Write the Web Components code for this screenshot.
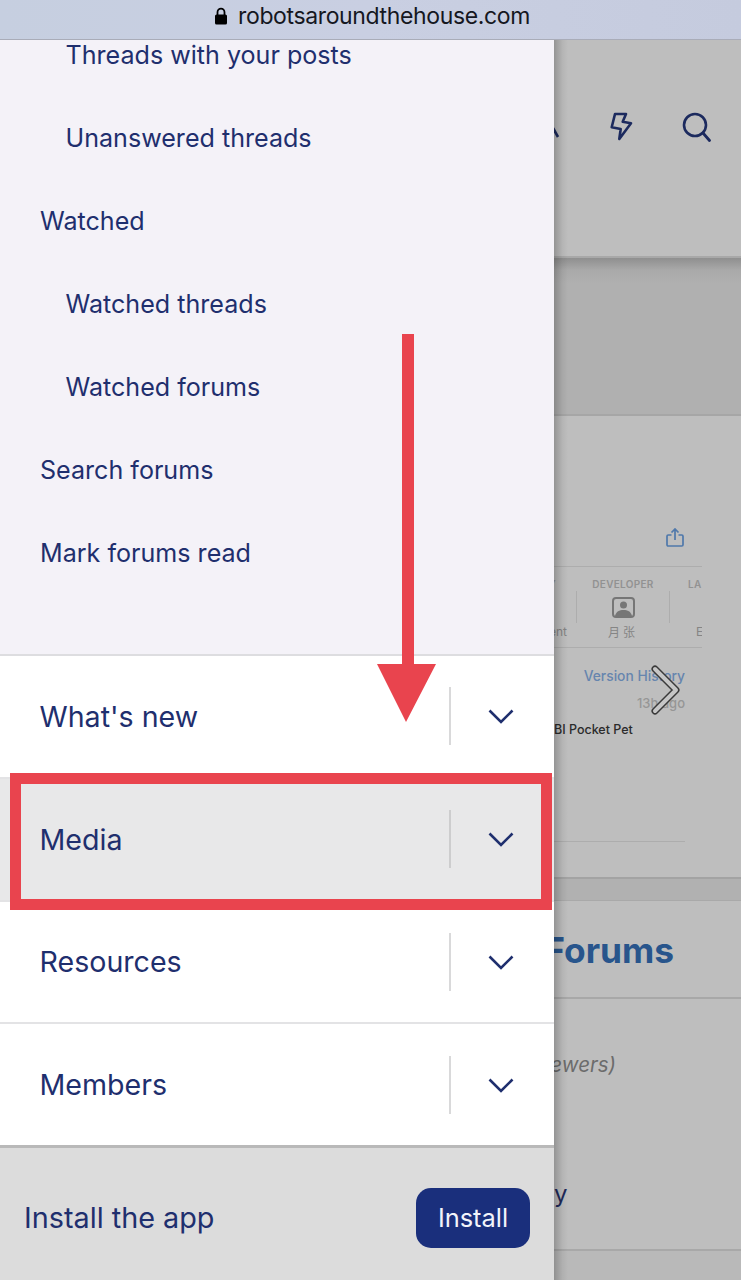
<!DOCTYPE html>
<html>
<head>
<meta charset="utf-8">
<style>
  html, body { margin: 0; padding: 0; background: #bcbcbc; }
</style>
</head>
<body>
<app-shell>
  <url-bar slot="top">robotsaroundthehouse.com</url-bar>
  <nav-drawer slot="drawer">
    <sub-link indent>Threads with your posts</sub-link>
    <sub-link indent>Unanswered threads</sub-link>
    <sub-link>Watched</sub-link>
    <sub-link indent>Watched threads</sub-link>
    <sub-link indent>Watched forums</sub-link>
    <sub-link>Search forums</sub-link>
    <sub-link>Mark forums read</sub-link>
    <menu-row slot="rows">What's new</menu-row>
    <menu-row slot="rows" active>Media</menu-row>
    <menu-row slot="rows">Resources</menu-row>
    <menu-row slot="rows">Members</menu-row>
    <install-bar slot="footer"></install-bar>
  </nav-drawer>
  <dimmed-page slot="page"></dimmed-page>
  <red-marks slot="over"></red-marks>
</app-shell>

<script>
const FONT = `Inter, "Noto Sans", sans-serif`;
const INK = '#1f2f6e';

class AppShell extends HTMLElement {
  constructor() {
    super();
    this.attachShadow({ mode: 'open' }).innerHTML = `
      <style>
        :host { display: flex; flex-direction: column; width: 741px; height: 1280px; overflow: hidden; }
        .stage { position: relative; flex: 1; display: flex; min-height: 0; }
      </style>
      <slot name="top"></slot>
      <div class="stage">
        <slot name="drawer"></slot>
        <slot name="page"></slot>
        <slot name="over"></slot>
      </div>`;
  }
}

class UrlBar extends HTMLElement {
  constructor() {
    super();
    this.attachShadow({ mode: 'open' }).innerHTML = `
      <style>
        :host {
          display: flex; align-items: center; justify-content: center; gap: 10px;
          height: 40px; flex: none; box-sizing: border-box;
          background: linear-gradient(90deg, #c6cfe0, #c9cfe2 50%, #c5cbde);
          border-bottom: 1px solid #a9acb8;
          font: 400 23px ${FONT}; color: #15171f; padding: 0 0 7px 3px;
          letter-spacing: -0.37px;
        }
        svg { display: block; }
      </style>
      <svg width="14" height="18" viewBox="0 0 14 18">
        <path d="M3.5 8V5.2a3.5 3.5 0 0 1 7 0V8" fill="none" stroke="#000" stroke-width="1.8"/>
        <rect x="1" y="7.5" width="12" height="10" rx="1.6" fill="#000"/>
      </svg>
      <slot></slot>`;
  }
}

class NavDrawer extends HTMLElement {
  constructor() {
    super();
    this.attachShadow({ mode: 'open' }).innerHTML = `
      <style>
        :host {
          display: flex; flex-direction: column; flex: none; width: 554px;
          background: #fff; position: relative; z-index: 1;
        }
        .subs {
          display: flex; flex-direction: column; height: 616px; flex: none; box-sizing: border-box;
          background: #f4f2f8; border-bottom: 2px solid #dddde0; overflow: hidden;
        }
        .rows { display: flex; flex-direction: column; flex: none; height: 489px; }
      </style>
      <div class="subs"><slot></slot></div>
      <div class="rows"><slot name="rows"></slot></div>
      <slot name="footer"></slot>`;
  }
}

class SubLink extends HTMLElement {
  constructor() {
    super();
    this.attachShadow({ mode: 'open' }).innerHTML = `
      <style>
        :host {
          display: flex; align-items: center; height: 83px; flex: none; padding-left: 40px;
          font: 400 25.1px ${FONT}; color: ${INK};
        }
        :host([indent]) { padding-left: 65.5px; }
        /* the list is scrolled: the first row is cut by the top of the drawer */
        :host(:first-child) { margin-top: -27px; }
      </style>
      <slot></slot>`;
  }
}

class MenuRow extends HTMLElement {
  constructor() {
    super();
    this.attachShadow({ mode: 'open' }).innerHTML = `
      <style>
        :host {
          display: flex; align-items: center; flex: 1; box-sizing: border-box;
          padding-left: 39.5px; border-bottom: 2px solid #e3e3e5;
          font: 400 28.6px ${FONT}; color: ${INK};
        }
        :host(:last-of-type) { border-bottom: 0; }
        :host([active]) { background: #e8e8e9; }
        .label { flex: 1; }
        .split { width: 2px; height: 58px; background: #d9d9da; }
        :host([active]) .split { background: #cdcdce; }
        .toggle { width: 100px; margin-right: 3px; display: flex; justify-content: center; }
        svg { display: block; }
      </style>
      <span class="label"><slot></slot></span>
      <span class="split"></span>
      <span class="toggle">
        <svg width="26" height="16" viewBox="0 0 26 16">
          <path d="M1.5 2.5 13 14 24.5 2.5" fill="none" stroke="${INK}" stroke-width="2.6"/>
        </svg>
      </span>`;
  }
}

class InstallBar extends HTMLElement {
  constructor() {
    super();
    this.attachShadow({ mode: 'open' }).innerHTML = `
      <style>
        :host {
          display: flex; align-items: center; justify-content: space-between; flex: 1; box-sizing: border-box;
          padding: 7px 24px 0; background: #dcdcdc; border-top: 3px solid #b9b9b9;
          font: 400 28.8px ${FONT}; color: ${INK};
        }
        .btn {
          display: flex; align-items: center; justify-content: center;
          width: 114px; height: 60px; border-radius: 15px; margin-bottom: 0;
          background: #1a2f7c; color: #f2f4fb; font-size: 25.4px;
        }
      </style>
      <span>Install the app</span>
      <span class="btn">Install</span>`;
  }
}

// everything behind the scrim, right aligned so the drawer cuts it off
class DimmedPage extends HTMLElement {
  constructor() {
    super();
    this.attachShadow({ mode: 'open' }).innerHTML = `
      <style>
        :host {
          display: flex; flex-direction: column; flex: 1; min-width: 0; overflow: hidden;
          font-family: ${FONT}; background: #b1b1b1; position: relative;
        }
        :host::before {
          content: ""; position: absolute; top: 0; bottom: 0; left: 0; width: 14px; z-index: 1;
          background: linear-gradient(90deg, rgba(0,0,0,.22), rgba(0,0,0,.05) 60%, rgba(0,0,0,0));
        }
        svg { display: block; flex: none; }
        section { background: #bebebe; flex: none; display: flex; flex-direction: column; box-sizing: border-box; }

        .head {
          height: 218px; border-bottom: 2px solid #a8a8a8; flex-direction: row;
          justify-content: flex-end; align-items: flex-start; gap: 47px; padding: 71px 30px 0 0;
        }
        .band {
          height: 156px; flex: none;
          background: linear-gradient(180deg, #8f8f8f, #a9a9a9 12px, #b0b0b0 26px);
        }

        .card { height: 465px; border-top: 2px solid #a6a6a6; border-bottom: 2px solid #a3a3a3; }
        .share { height: 151px; flex: none; margin-right: 39px; border-bottom: 1px solid #adadad; display: flex; justify-content: flex-end; align-items: flex-start; padding: 112px 18px 0 0; box-sizing: border-box; }
        .strip { height: 81px; flex: none; margin-right: 39px; border-bottom: 1px solid #adadad; display: flex; box-sizing: border-box; overflow: hidden; color: #8a8a8a; }
        .cell { display: flex; flex-direction: column; align-items: center; flex: none; box-sizing: border-box; padding-top: 11px; white-space: nowrap; }
        .cell.first { width: 22px; align-items: flex-end; padding-right: 9px; }
        .cell.first .cap { margin-right: 11px; }
        .cell.dev { width: 92px; }
        .cell.lang { width: 33px; align-items: flex-start; padding-left: 18px; }
        .rule { width: 1px; height: 32px; margin-top: 24px; background: #adadad; flex: none; }
        .cap { font-size: 10px; line-height: 12px; font-weight: 600; letter-spacing: .3px; height: 12px; color: #929292; }
        .val { font-size: 12px; line-height: 16px; margin-top: 34px; color: #858585; }
        .dev svg { margin: 7px 0 -19px; }
        .dev .val { font-family: Inter, "Noto Sans CJK SC", sans-serif; letter-spacing: 3px; margin-top: 26px; }
        .lang .val { padding-left: 8px; }

        .ver { margin: 18px 56px 0 0; line-height: 20px; font-size: 13.8px; font-weight: 500; color: #6685ae; text-align: right; }
        .ago { margin: 7px 56px 0 0; line-height: 20px; font-size: 13px; font-weight: 500; color: #969696; text-align: right; }
        .name { margin: 8px 0 0 0; line-height: 18px; font-size: 12.5px; font-weight: 500; color: #2b2b2b; }
        .line { margin: 102px 56px 0 0; height: 1px; background: #adadad; flex: none; }

        .gap { height: 21px; flex: none; }

        .forums { height: 351px; border-top: 1px solid #a9a9a9; border-bottom: 2px solid #a8a8a8; }
        .title { height: 98px; flex: none; border-bottom: 2px solid #a8a8a8; box-sizing: border-box; display: flex; justify-content: flex-end; align-items: center; padding: 2px 67px 0 0; font-size: 35.3px; font-weight: 700; color: #28558c; overflow: hidden; white-space: nowrap; }
        .view { display: flex; justify-content: flex-end; padding-right: 125px; margin-top: 52px; line-height: 28px; font-size: 20.5px; font-style: italic; color: #6c6c6c; }
        .who { padding-left: 0; margin-top: 100px; line-height: 30px; font-size: 24px; color: #1f2a5a; }
        .tail { flex: 1; background: #b9b9b9; }
        .arrow { position: absolute; left: 96px; top: 624px; z-index: 1; }
      </style>
      <section class="head">
        <svg width="10" height="30" viewBox="0 0 10 30" style="margin-right:3px"><path d="M3 17 8 26" fill="none" stroke="#1c2a5e" stroke-width="2.6"/></svg>
        <svg width="24" height="30" viewBox="0 0 24 30">
          <path d="M5 3h11l-3.3 7.7 8.3 1.6L9.3 28l1.4-10-9-1.7z" fill="none" stroke="#1c2a5e" stroke-width="2.6" stroke-linejoin="round"/>
        </svg>
        <svg width="30" height="32" viewBox="0 0 30 32">
          <circle cx="14" cy="14" r="11" fill="none" stroke="#1c2a5e" stroke-width="2.6"/>
          <path d="M22 22l6.5 7.5" stroke="#1c2a5e" stroke-width="2.8" stroke-linecap="round"/>
        </svg>
      </section>
      <div class="band"></div>
      <section class="card">
        <div class="share">
          <svg width="18" height="19" viewBox="0 0 18 19" fill="none" stroke="#4f78ab" stroke-width="1.7">
            <path d="M5.5 7H2.2a1.2 1.2 0 0 0-1.2 1.2v8.6A1.2 1.2 0 0 0 2.2 18h13.6a1.2 1.2 0 0 0 1.2-1.2V8.2A1.2 1.2 0 0 0 15.800 7h-3.300"/>
            <path d="M9 12V1.500M5.500 4.500 9 1l3.500 3.500"/>
          </svg>
        </div>
        <div class="strip">
          <div class="cell first"><span class="cap">Y</span><span class="val">ent</span></div>
          <div class="rule"></div>
          <div class="cell dev">
            <span class="cap">DEVELOPER</span>
            <svg width="23" height="21" viewBox="0 0 23 21">
              <rect x="1" y="1" width="21" height="19" rx="3" fill="none" stroke="#767676" stroke-width="2"/>
              <circle cx="11.500" cy="8" r="3.500" fill="#767676"/>
              <path d="M3 19c1-4.500 4.500-6 8.500-6s7.500 1.500 8.500 6z" fill="#767676"/>
            </svg>
            <span class="val">月张</span>
          </div>
          <div class="rule"></div>
          <div class="cell lang"><span class="cap">LA</span><span class="val">E</span></div>
        </div>
        <div class="ver">Version History</div>
        <div class="ago">13h ago</div>
        <div class="name">BI Pocket Pet</div>
        <div class="line"></div>
      </section>
      <div class="gap"></div>
      <section class="forums">
        <div class="title">Forums</div>
        <div class="view">ewers)</div>
        <div class="who">y</div>
      </section>
      <div class="tail"></div>
      <svg class="arrow" width="32" height="52" viewBox="0 0 32 52" fill="none" stroke-linejoin="round" stroke-linecap="round">
        <path d="M5 5 26 26 5 47" stroke="#3a3a3a" stroke-width="7"/>
        <path d="M5 5 26 26 5 47" stroke="#c6c6c6" stroke-width="4"/>
      </svg>`;
  }
}

// the red arrow and box somebody drew on the screenshot
class RedMarks extends HTMLElement {
  constructor() {
    super();
    this.attachShadow({ mode: 'open' }).innerHTML = `
      <style>
        :host { position: absolute; inset: 0; z-index: 2; pointer-events: none; }
        .box { position: absolute; left: 10px; top: 733px; width: 542px; height: 137px; box-sizing: border-box; border: 11px solid #e9444e; }
        svg { position: absolute; left: 370px; top: 290px; }
      </style>
      <svg width="72" height="400" viewBox="0 0 72 400">
        <path d="M32 4h12v330h22L36 392 7 334h25z" fill="#e9444e"/>
      </svg>
      <div class="box"></div>`;
  }
}

customElements.define('app-shell', AppShell);
customElements.define('url-bar', UrlBar);
customElements.define('nav-drawer', NavDrawer);
customElements.define('sub-link', SubLink);
customElements.define('menu-row', MenuRow);
customElements.define('install-bar', InstallBar);
customElements.define('dimmed-page', DimmedPage);
customElements.define('red-marks', RedMarks);
</script>
</body>
</html>
